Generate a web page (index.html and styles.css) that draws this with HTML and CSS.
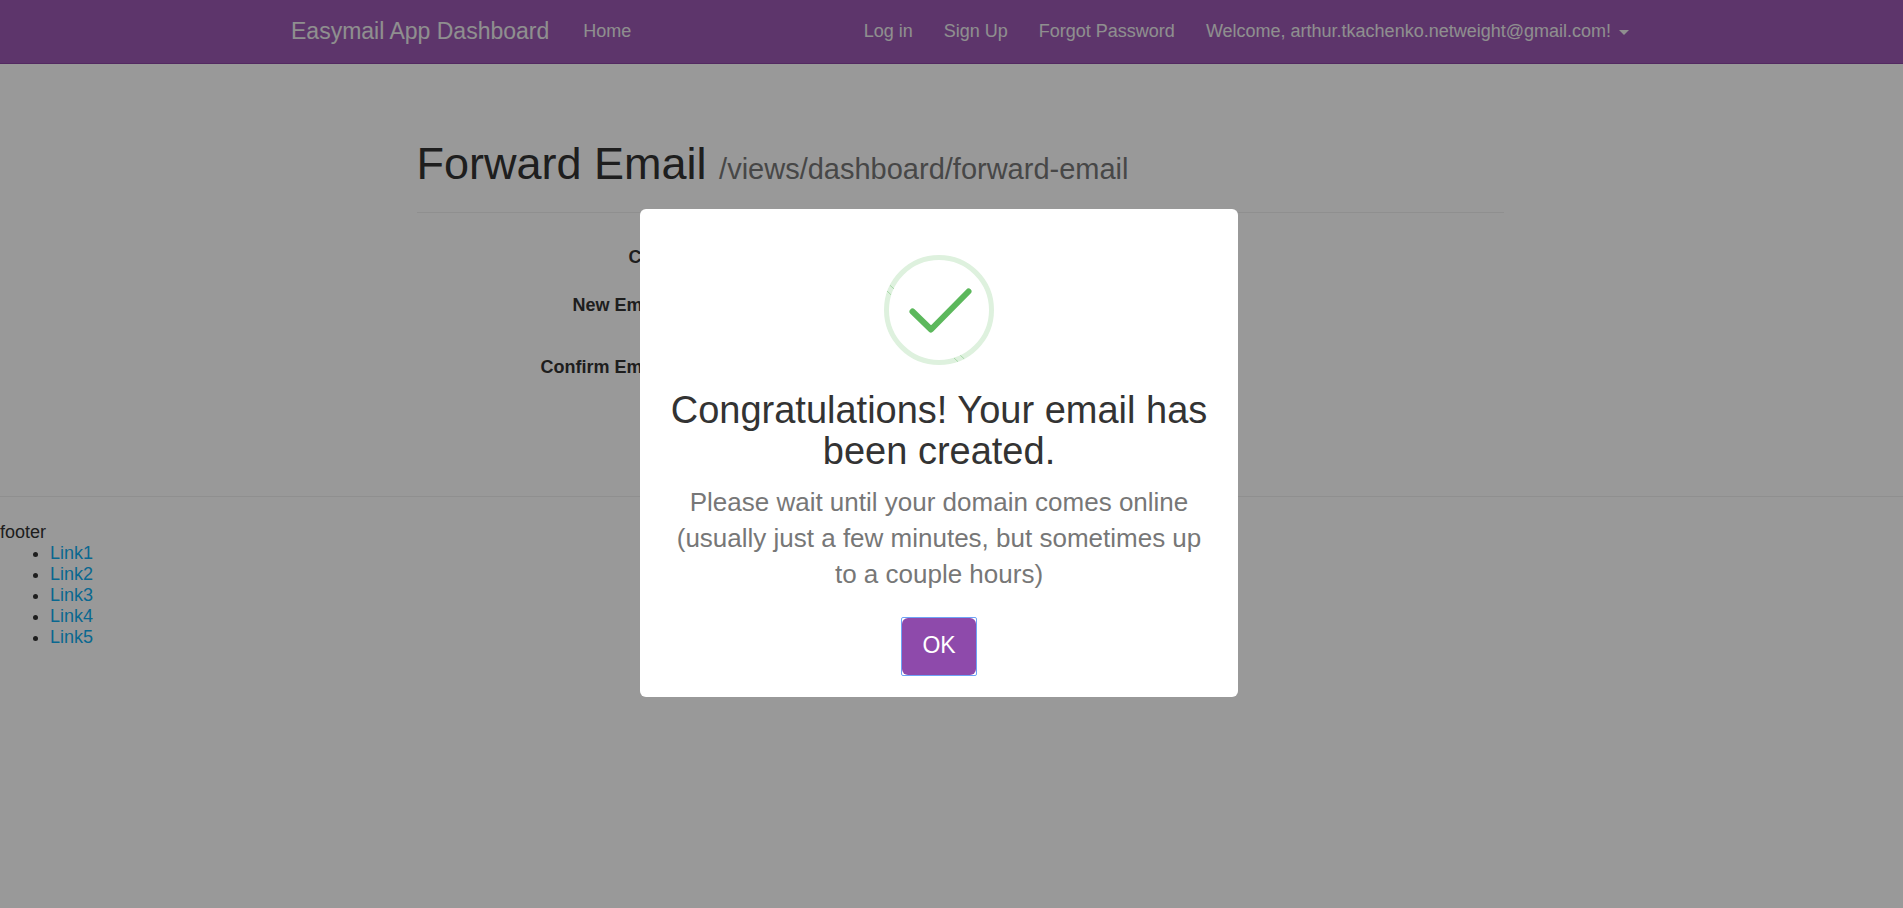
FILE: index.html
```html
<!DOCTYPE html>
<html lang="en">
<head>
<meta charset="utf-8">
<meta name="viewport" content="width=device-width, initial-scale=1">
<title>Easymail App Dashboard</title>
<link rel="stylesheet" href="styles.css">
</head>
<body>
<header class="navbar">
  <nav class="navbar-inner">
    <a class="brand" href="#">Easymail App Dashboard</a>
    <a class="nav-link" href="#">Home</a>
    <div class="nav-right">
      <a class="nav-link" href="#">Log in</a>
      <a class="nav-link" href="#">Sign Up</a>
      <a class="nav-link" href="#">Forgot Password</a>
      <a class="nav-link" href="#">Welcome, arthur.tkachenko.netweight@gmail.com!<span class="caret"></span></a>
    </div>
  </nav>
</header>
<main class="page">
  <div class="content">
    <h1 class="page-title">Forward Email <small class="page-path">/views/dashboard/forward-email</small></h1>
    <form class="form">
      <div class="row row-short"><label class="label" for="city">City</label><input class="field field-short" id="city" type="text"></div>
      <div class="row"><label class="label" for="email">New Email</label><input class="field" id="email" type="email"></div>
      <div class="row"><label class="label" for="confirm">Confirm Email</label><input class="field" id="confirm" type="email"></div>
      <div class="row"></div>
    </form>
  </div>
</main>
<footer class="footer">
  <p class="footer-text">footer</p>
  <ul class="footer-links">
    <li><a class="footer-link" href="#">Link1</a></li>
    <li><a class="footer-link" href="#">Link2</a></li>
    <li><a class="footer-link" href="#">Link3</a></li>
    <li><a class="footer-link" href="#">Link4</a></li>
    <li><a class="footer-link" href="#">Link5</a></li>
  </ul>
</footer>
<div class="overlay">
  <div class="modal" role="dialog" aria-modal="true" aria-labelledby="modal-title">
    <svg class="modal-icon" viewBox="0 0 110 110" aria-hidden="true">
      <circle cx="55" cy="55" r="52.5" fill="none" stroke="#def1de" stroke-width="5"/>
      <path d="M6 30.3l4 3.6M3 36l4 3.8M70 103l4 3.7M76.3 100.3l3.8 3.5" fill="none" stroke="#8fcd8f" stroke-width=".7"/>
      <path d="M28.5 56.5L47 74.5L84.5 36.5" fill="none" stroke="#5cb85c" stroke-width="6" stroke-linecap="round" stroke-linejoin="round"/>
    </svg>
    <h2 class="modal-title" id="modal-title">Congratulations! Your email has been created.</h2>
    <p class="modal-text">Please wait until your domain comes online (usually just a few minutes, but sometimes up to a couple hours)</p>
    <button class="modal-ok" type="button"><span class="modal-ok-face">OK</span></button>
  </div>
</div>
</body>
</html>
```
FILE: styles.css
```css
* { box-sizing: border-box; }

body {
  margin: 0;
  background: #fff;
  color: #333;
  font: 18px/21px "Liberation Sans", Arial, sans-serif;
}

a { text-decoration: none; }

/* Navigation */
.navbar {
  padding: 0 19px 0 36px;
  background: #9b59b3;
  border-bottom: 1px solid #8a45a2;
}

.navbar-inner {
  display: flex;
  align-items: center;
  max-width: 1338px;
  height: 63px;
  margin: 0 auto;
}

.brand {
  margin-right: 34px;
  color: #eee;
  font-size: 23px;
}

.nav-link { color: #eee; white-space: nowrap; }

.nav-right {
  display: flex;
  gap: 31px;
  margin-left: auto;
}

.caret {
  display: inline-block;
  margin-left: 8px;
  vertical-align: middle;
  border: 5px solid transparent;
  border-top-color: #eee;
  border-bottom: 0;
}

/* Page content */
.page { padding: 74px 0 42px 17px; }

.content {
  max-width: 1087px;
  margin: 0 auto;
}

.page-title {
  margin: 0 0 25px;
  padding-bottom: 17px;
  border-bottom: 1px solid #eee;
  font-size: 45px;
  font-weight: 400;
  line-height: 51px;
}

.page-path {
  color: #777;
  font-size: 29px;
}

.form {
  display: grid;
  gap: 18px;
}

.row {
  display: grid;
  grid-template-columns: 246px 1fr;
  column-gap: 18px;
  min-height: 44px;
}

.row-short { min-height: 30px; }

.label {
  padding-top: 9px;
  font-weight: 700;
  text-align: right;
}

.field {
  width: 100%;
  max-width: 500px;
  height: 44px;
  padding: 0 12px;
  border: 1px solid #ccc;
  border-radius: 5px;
  font: inherit;
}

.field-short { height: 30px; }

/* Footer */
.footer {
  padding-top: 25px;
  border-top: 1px solid #eee;
}

.footer-text { margin: 0; }

.footer-links {
  margin: 0;
  padding-left: 50px;
}

.footer-link { color: #10aef0; }

/* Dialog */
.overlay {
  position: fixed;
  inset: 0;
  display: flex;
  align-items: center;
  justify-content: center;
  padding: 0 25px 2px 0;
  background: rgba(0, 0, 0, .4);
}

.modal {
  display: flex;
  flex-direction: column;
  align-items: center;
  width: 598px;
  padding: 46px 21px;
  padding-bottom: 21px;
  border-radius: 6px;
  background: #fff;
  text-align: center;
}

.modal-icon {
  width: 110px;
  height: 110px;
}

.modal-title {
  margin: 25px 0 12px;
  font-size: 38px;
  font-weight: 400;
  line-height: 41px;
}

.modal-text {
  margin: 0;
  padding: 0 8px;
  color: #777;
  font-size: 26px;
  line-height: 36px;
}

.modal-ok {
  margin-top: 25px;
  padding: 0;
  border: 1px solid #6ea3f7;
  border-radius: 2px;
  background: #fff;
}

.modal-ok-face {
  display: block;
  padding: 14px 20px 16px;
  border-radius: 6px;
  background: #8e4aab;
  color: #fff;
  font: 23px/27px "Liberation Sans", Arial, sans-serif;
}
```
